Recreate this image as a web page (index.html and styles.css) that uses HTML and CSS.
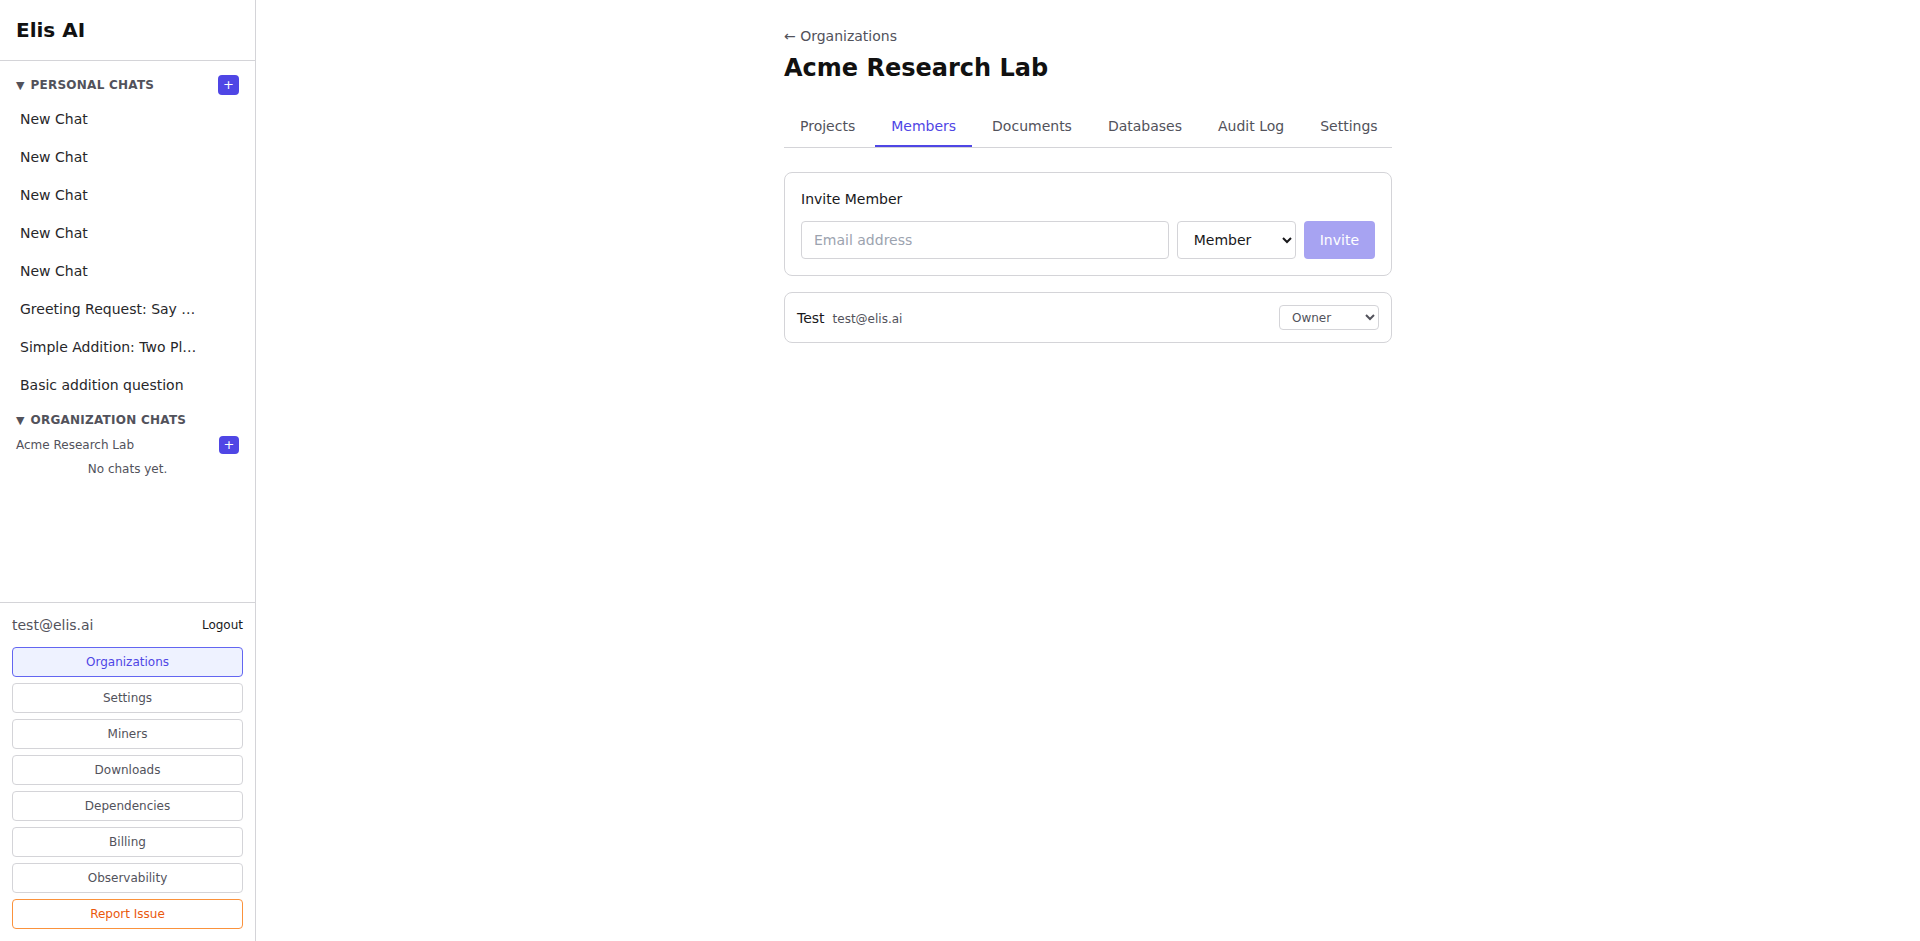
FILE: index.html
```html
<!DOCTYPE html>
<html lang="en">
<head>
<meta charset="utf-8">
<title>Acme Research Lab - Members</title>
<link rel="stylesheet" href="styles.css">
</head>
<body>
<div class="app">
  <aside class="sidebar">
    <div class="brand">Elis AI</div>
    <div class="chats">
      <section class="section">
        <div class="section-head">
          <span class="section-title"><span class="caret">▼</span>Personal Chats</span>
          <button class="add">+</button>
        </div>
        <ul class="chat-list">
          <li class="chat">New Chat</li>
          <li class="chat">New Chat</li>
          <li class="chat">New Chat</li>
          <li class="chat">New Chat</li>
          <li class="chat">New Chat</li>
          <li class="chat">Greeting Request: Say Hello to the World</li>
          <li class="chat">Simple Addition: Two Plus Two</li>
          <li class="chat">Basic addition question</li>
        </ul>
      </section>
      <section class="section">
        <div class="section-head">
          <span class="section-title"><span class="caret">▼</span>Organization Chats</span>
        </div>
        <div class="org-row">
          <span class="org-name">Acme Research Lab</span>
          <button class="add add-sm">+</button>
        </div>
        <div class="empty">No chats yet.</div>
      </section>
    </div>
    <div class="account">
      <div class="account-row">
        <span class="account-email">test@elis.ai</span>
        <button class="logout">Logout</button>
      </div>
      <nav class="nav">
        <button class="nav-btn nav-active">Organizations</button>
        <button class="nav-btn">Settings</button>
        <button class="nav-btn">Miners</button>
        <button class="nav-btn">Downloads</button>
        <button class="nav-btn">Dependencies</button>
        <button class="nav-btn">Billing</button>
        <button class="nav-btn">Observability</button>
        <button class="nav-btn nav-report">Report Issue</button>
      </nav>
    </div>
  </aside>
  <main class="main">
    <div class="container">
      <a class="back">← Organizations</a>
      <h1 class="title">Acme Research Lab</h1>
      <div class="tabs">
        <button class="tab">Projects</button>
        <button class="tab tab-active">Members</button>
        <button class="tab">Documents</button>
        <button class="tab">Databases</button>
        <button class="tab">Audit Log</button>
        <button class="tab">Settings</button>
      </div>
      <div class="card invite-card">
        <div class="card-title">Invite Member</div>
        <div class="invite-form">
          <input class="input" type="email" placeholder="Email address">
          <select class="select">
            <option>Member</option>
            <option>Admin</option>
          </select>
          <button class="invite-btn" disabled>Invite</button>
        </div>
      </div>
      <div class="card member-card">
        <div class="member-info">
          <span class="member-name">Test</span>
          <span class="member-email">test@elis.ai</span>
        </div>
        <select class="role-select">
          <option>Owner</option>
          <option>Admin</option>
          <option>Member</option>
        </select>
      </div>
    </div>
  </main>
</div>
</body>
</html>
```

FILE: styles.css
```css
* {
  box-sizing: border-box;
}

html, body {
  margin: 0;
  padding: 0;
  height: 100%;
}

body {
  font-family: "DejaVu Sans", sans-serif;
  color: #18181b;
  background: #ffffff;
}

button, input, select {
  font-family: inherit;
}

.app {
  display: flex;
  height: 100vh;
}

/* Sidebar */
.sidebar {
  width: 256px;
  flex-shrink: 0;
  border-right: 1px solid #d4d4d8;
  display: flex;
  flex-direction: column;
  background: #ffffff;
}

.brand {
  height: 61px;
  padding: 0 16px;
  display: flex;
  align-items: center;
  font-size: 20px;
  font-weight: 700;
  color: #111111;
  border-bottom: 1px solid #d4d4d8;
}

.chats {
  flex: 1;
  overflow: hidden;
  padding: 14px 16px;
}

.section + .section {
  margin-top: 6px;
}

.section-head {
  height: 20px;
  display: flex;
  align-items: center;
  justify-content: space-between;
}

.section-title {
  font-size: 12px;
  font-weight: 700;
  text-transform: uppercase;
  letter-spacing: 0.25px;
  color: #52525b;
  display: flex;
  align-items: center;
}

.caret {
  font-size: 11px;
  margin-right: 6px;
  letter-spacing: 0;
}

.add {
  width: 21px;
  height: 20px;
  border: none;
  border-radius: 4px;
  background: #4f46e5;
  color: #ffffff;
  font-size: 13px;
  line-height: 20px;
  padding: 0;
  cursor: pointer;
}

.add-sm {
  width: 20px;
  height: 18px;
  line-height: 18px;
}

.chat-list {
  list-style: none;
  margin: 5px 0 0;
  padding: 0;
}

.chat {
  padding: 9px 42px 9px 4px;
  font-size: 14px;
  line-height: 20px;
  color: #27272a;
  white-space: nowrap;
  overflow: hidden;
  text-overflow: ellipsis;
}

.org-row {
  margin-top: 6px;
  height: 18px;
  display: flex;
  align-items: center;
  justify-content: space-between;
}

.org-name {
  font-size: 12px;
  color: #52525b;
}

.empty {
  margin-top: 7px;
  text-align: center;
  font-size: 12px;
  line-height: 16px;
  color: #52525b;
}

.account {
  border-top: 1px solid #d4d4d8;
  padding: 12px;
}

.account-row {
  display: flex;
  align-items: center;
  justify-content: space-between;
  height: 20px;
}

.account-email {
  font-size: 14px;
  color: #52525b;
}

.logout {
  border: none;
  background: none;
  padding: 0;
  font-size: 12px;
  color: #18181b;
  cursor: pointer;
}

.nav {
  margin-top: 12px;
  display: flex;
  flex-direction: column;
  gap: 6px;
}

.nav-btn {
  height: 30px;
  border: 1px solid #d4d4d8;
  border-radius: 4px;
  background: #ffffff;
  color: #52525b;
  font-size: 12px;
  cursor: pointer;
}

.nav-active {
  background: #eef2ff;
  border-color: #6366f1;
  color: #4f46e5;
}

.nav-report {
  border-color: #fb923c;
  color: #ea580c;
}

/* Main */
.main {
  flex: 1;
  overflow: auto;
}

.container {
  max-width: 608px;
  margin: 0 auto;
  padding-top: 25px;
}

.back {
  display: block;
  font-size: 14px;
  line-height: 22px;
  color: #52525b;
  cursor: pointer;
}

.title {
  margin: 5px 0 23px;
  font-size: 24px;
  line-height: 32px;
  font-weight: 700;
  color: #111111;
}

.tabs {
  display: flex;
  gap: 4px;
  border-bottom: 1px solid #d4d4d8;
}

.tab {
  flex-shrink: 0;
  white-space: nowrap;
  padding: 9px 16px;
  font-size: 14px;
  line-height: 20px;
  color: #52525b;
  background: none;
  border: none;
  border-bottom: 2px solid transparent;
  cursor: pointer;
}

.tab-active {
  color: #4f46e5;
  border-bottom-color: #4f46e5;
}

.card {
  border: 1px solid #d4d4d8;
  border-radius: 8px;
  background: #ffffff;
}

.invite-card {
  margin-top: 24px;
  padding: 16px;
}

.card-title {
  font-size: 14px;
  line-height: 20px;
  color: #18181b;
  margin-bottom: 12px;
}

.invite-form {
  display: flex;
  gap: 8px;
}

.input {
  flex: 1;
  height: 38px;
  padding: 8px 12px;
  border: 1px solid #d4d4d8;
  border-radius: 4px;
  font-size: 14px;
  color: #18181b;
}

.input::placeholder {
  color: #9ca3af;
}

.select {
  width: 119px;
  height: 38px;
  padding: 0 8px 0 12px;
  border: 1px solid #d4d4d8;
  border-radius: 4px;
  background: #ffffff;
  font-size: 14px;
  color: #18181b;
}

.invite-btn {
  height: 38px;
  padding: 0 16px;
  border: none;
  border-radius: 4px;
  background: #a7a3f2;
  color: #ffffff;
  font-size: 14px;
}

.member-card {
  margin-top: 16px;
  padding: 12px;
  display: flex;
  align-items: center;
  justify-content: space-between;
}

.member-info {
  display: flex;
  align-items: baseline;
  gap: 8px;
}

.member-name {
  font-size: 14px;
  color: #18181b;
}

.member-email {
  font-size: 12px;
  color: #52525b;
}

.role-select {
  width: 100px;
  height: 25px;
  padding: 0 4px 0 8px;
  border: 1px solid #d4d4d8;
  border-radius: 4px;
  background: #ffffff;
  font-size: 12px;
  color: #52525b;
}
```
